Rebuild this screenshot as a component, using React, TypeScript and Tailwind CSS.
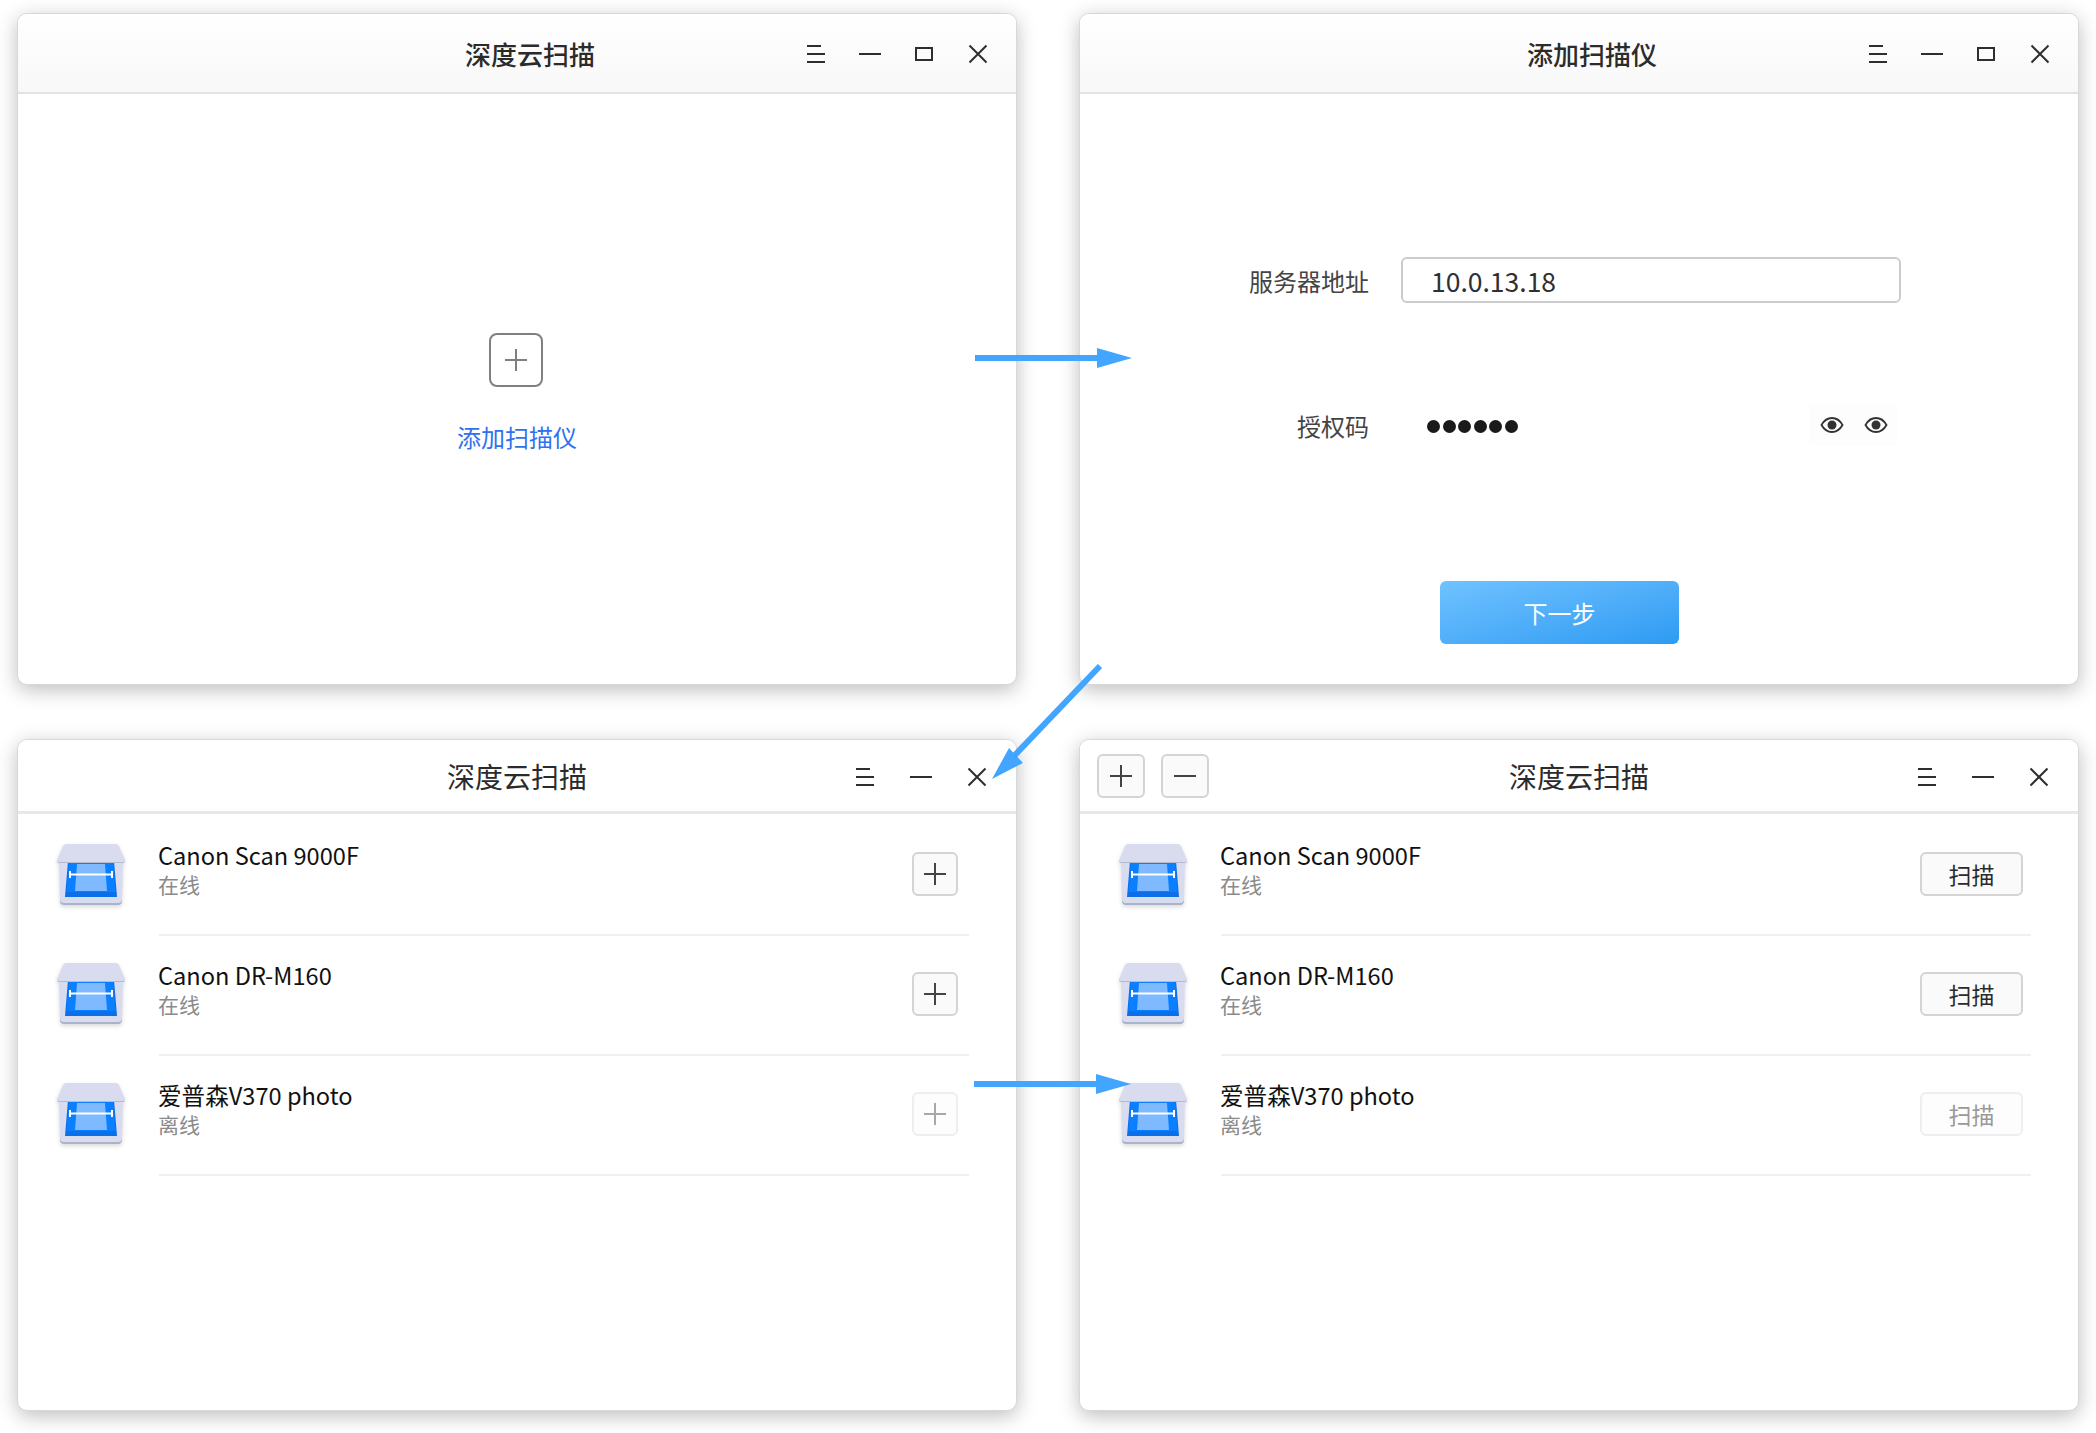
import type { ReactNode } from "react";

const Icon = ({ children, size = 24 }: { children: ReactNode; size?: number }) => (
  <svg width={size} height={size} viewBox="0 0 24 24" fill="none" stroke="#2e2e2e" strokeWidth="2">
    {children}
  </svg>
);

const MenuIcon = () => (
  <Icon>
    <path d="M3 4h14M3 12h18M3 20h18" />
  </Icon>
);
const MinIcon = () => (
  <Icon>
    <path d="M1 12h22" />
  </Icon>
);
const MaxIcon = () => (
  <Icon>
    <rect x="4" y="6" width="16" height="12" />
  </Icon>
);
const CloseIcon = () => (
  <Icon>
    <path d="M3.500 3.500l17 17M20.500 3.500l-17 17" />
  </Icon>
);

const ControlBtn = ({ children, wide }: { children: ReactNode; wide?: boolean }) => (
  <div className={wide ? "flex h-8 w-[56px] items-center justify-center" : "flex h-8 w-[54px] items-center justify-center"}>
    {children}
  </div>
);

const PlusGlyph = ({ color = "#444444", size = 24 }: { color?: string; size?: number }) => (
  <svg width={size} height={size} viewBox="0 0 24 24" fill="none" stroke={color} strokeWidth="2">
    <path d="M1 12h22M12 1v22" />
  </svg>
);

const ScannerIcon = ({ className }: { className?: string }) => (
  <svg width="72" height="66" viewBox="0 0 72 66" className={className}>
    <path d="M4 21h64l-1 37a4 4 0 0 1-4 4H9a4 4 0 0 1-4-4z" fill="#d8dcee" />
    <path d="M5 57a4 4 0 0 0 4 4h54a4 4 0 0 0 4-4v2a4 4 0 0 1-4 4H9a4 4 0 0 1-4-4z" fill="#a9b3c9" />
    <path d="M13 19h46l3 36H10z" fill="#0a6fe8" />
    <path d="M14 19h44l2.500 31h-49z" fill="#0a7fff" />
    <path d="M22 22h28l2 27H20z" fill="#7fb9ff" />
    <path d="M15 32.500h42" stroke="#fff" strokeWidth="2" />
    <path d="M15 29v7M57 29v7" stroke="#fff" strokeWidth="2" />
    <path d="M2 18 8 4a4 4 0 0 1 4-2h48a4 4 0 0 1 4 2l6 14a2 2 0 0 1-2 2H4a2 2 0 0 1-2-2z" fill="#d8dcee" />
    <path d="M2 18a2 2 0 0 0 2 2h64a2 2 0 0 0 2-2v1a2 2 0 0 1-2 2H4a2 2 0 0 1-2-2z" fill="#b4bbd0" />
  </svg>
);

const EyeIcon = () => (
  <svg width="24" height="18" viewBox="0 0 24 18" fill="none">
    <path d="M1.500 9C4 4.500 8 2 12 2s8 2.500 10.500 7C20 13.500 16 16 12 16S4 13.500 1.500 9z" stroke="#333" strokeWidth="1.800" />
    <circle cx="12" cy="9" r="4.500" fill="#333" />
  </svg>
);

type WinProps = {
  title: string;
  shade?: boolean;
  titleClass: string;
  left?: ReactNode;
  controls: ReactNode;
  children: ReactNode;
};

const Win = ({ title, shade, titleClass, left, controls, children }: WinProps) => (
  <div className="flex h-[672px] w-[1000px] flex-col overflow-hidden rounded-[10px] border border-[#d8d8d8] bg-white shadow-[0_5px_20px_rgba(0,0,0,0.26)]">
    <div
      className={
        shade
          ? "grid h-[80px] shrink-0 grid-cols-[1fr_auto_1fr] items-center border-b-2 border-[#e3e3e3] bg-gradient-to-b from-white to-[#f8f8f8]"
          : "grid h-[74px] shrink-0 grid-cols-[1fr_auto_1fr] items-center border-b-[3px] border-[#e8e8e8] bg-white"
      }
    >
      <div className="flex gap-4 pl-[17px]">{left}</div>
      <div className={titleClass}>{title}</div>
      <div className="flex justify-end pr-[11px] pt-[2px]">{controls}</div>
    </div>
    {children}
  </div>
);

const devices = [
  { name: "Canon Scan 9000F", status: "在线", on: true, iconClass: "mt-[26px]" },
  { name: "Canon DR-M160", status: "在线", on: true, iconClass: "mt-[25px]" },
  { name: "爱普森V370 photo", status: "离线", on: false, iconClass: "mt-[25px]" },
];

const DeviceList = ({ action }: { action: (on: boolean) => ReactNode }) => (
  <div className="flex flex-col pt-[2px]">
    {devices.map((d) => (
      <div key={d.name}>
        <div className="flex h-[118px] items-start pl-[37px]">
          <ScannerIcon className={`shrink-0 drop-shadow-[0_2px_2px_rgba(0,0,0,0.15)] ${d.iconClass}`} />
          <div className="ml-[31px] flex-1 pt-[21px]">
            <div className="text-[23.6px] leading-[36px] text-[#111111]">{d.name}</div>
            <div className="mt-[-5px] text-[21px] leading-[32px] text-[#8a8a8a]">{d.status}</div>
          </div>
          {action(d.on)}
        </div>
        <div className="ml-[141px] mr-[47px] h-[2px] bg-[#f0f0f0]" />
      </div>
    ))}
  </div>
);

const Arrows = () => (
  <svg width="2096" height="1433" viewBox="0 0 2096 1433" className="pointer-events-none absolute left-0 top-0">
    <path d="M975 358h122" stroke="#42a5ff" strokeWidth="6" />
    <path d="M1097 348l35 10-35 10z" fill="#42a5ff" />
    <path d="M974 1084h122" stroke="#42a5ff" strokeWidth="6" />
    <path d="M1096 1074l35 10-35 10z" fill="#42a5ff" />
    <path d="M1100 666l-88 92" stroke="#42a5ff" strokeWidth="6" />
    <path d="M1009 748l-17 31 31-16z" fill="#42a5ff" />
  </svg>
);

export default function App() {
  return (
    <div
      className="relative h-[1433px] w-[2096px] overflow-hidden bg-white"
      style={{ fontFamily: '"Noto Sans CJK SC", "Noto Sans", sans-serif' }}
    >
      <div className="grid grid-cols-[1000px_1000px] gap-x-[62px] gap-y-[54px] pl-[17px] pt-[13px]">
        <Win
          title="深度云扫描"
          shade
          titleClass="pl-[26px] text-[26px] font-medium text-[#2b2b2b]"
          controls={
            <>
              <ControlBtn><MenuIcon /></ControlBtn>
              <ControlBtn><MinIcon /></ControlBtn>
              <ControlBtn><MaxIcon /></ControlBtn>
              <ControlBtn><CloseIcon /></ControlBtn>
            </>
          }
        >
          <div className="flex flex-col items-center pr-[2px] pt-[239px]">
            <div className="flex h-[54px] w-[54px] items-center justify-center rounded-[8px] border-2 border-[#808080]">
              <PlusGlyph color="#808080" />
            </div>
            <div className="ml-[2px] mt-[33px] text-[24px] leading-[34px] text-[#2f72f0]">添加扫描仪</div>
          </div>
        </Win>

        <Win
          title="添加扫描仪"
          shade
          titleClass="pl-[26px] text-[26px] font-medium text-[#2b2b2b]"
          controls={
            <>
              <ControlBtn><MenuIcon /></ControlBtn>
              <ControlBtn><MinIcon /></ControlBtn>
              <ControlBtn><MaxIcon /></ControlBtn>
              <ControlBtn><CloseIcon /></ControlBtn>
            </>
          }
        >
          <div className="flex flex-col pt-[163px]">
            <div className="flex h-[46px] items-center">
              <div className="w-[289px] pt-[2px] text-right text-[24px] text-[#444444]">服务器地址</div>
              <div className="ml-[32px] flex h-[46px] w-[500px] items-center rounded-[6px] border-2 border-[#cccccc] pl-[28px] pt-[2px] text-[26.500px] text-[#303030]">
                10.0.13.18
              </div>
            </div>
            <div className="mt-[101px] flex h-[44px] items-center">
              <div className="w-[289px] text-right text-[24px] text-[#444444]">授权码</div>
              <div className="ml-[58px] flex gap-[2.600px]">
                {[0, 1, 2, 3, 4, 5].map((i) => (
                  <div key={i} className="h-[13px] w-[13px] rounded-full bg-[#1a1a1a]" />
                ))}
              </div>
              <div className="ml-[291px] flex h-[42px] gap-[20px] self-start bg-[#fdfdfd] pl-[11px] pr-[9px] pt-[12px]">
                <div className="h-[18px]"><EyeIcon /></div>
                <div className="h-[18px]"><EyeIcon /></div>
              </div>
            </div>
            <div className="ml-[360px] mt-[133px] flex h-[63px] w-[239px] items-center justify-center rounded-[6px] bg-gradient-to-br from-[#6fc2ff] to-[#2b9bf3] text-[24px] text-white">
              下一步
            </div>
          </div>
        </Win>

        <Win
          title="深度云扫描"
          titleClass="text-[28px] text-[#2b2b2b]"
          controls={
            <>
              <ControlBtn wide><MenuIcon /></ControlBtn>
              <ControlBtn wide><MinIcon /></ControlBtn>
              <ControlBtn wide><CloseIcon /></ControlBtn>
            </>
          }
        >
          <DeviceList
            action={(on) => (
              <div
                className={
                  on
                    ? "mr-[58px] mt-[36px] flex h-[44px] w-[46px] items-center justify-center rounded-[6px] border-2 border-[#d4d4d4] bg-[#fafafa]"
                    : "mr-[58px] mt-[36px] flex h-[44px] w-[46px] items-center justify-center rounded-[6px] border-2 border-[#eeeeee] bg-[#fdfdfd]"
                }
              >
                <PlusGlyph color={on ? "#444444" : "#a8a8a8"} />
              </div>
            )}
          />
        </Win>

        <Win
          title="深度云扫描"
          titleClass="text-[28px] text-[#2b2b2b]"
          left={
            <>
              <div className="flex h-[44px] w-[48px] items-center justify-center rounded-[6px] border-2 border-[#d4d4d4] bg-[#fafafa]">
                <PlusGlyph />
              </div>
              <div className="flex h-[44px] w-[48px] items-center justify-center rounded-[6px] border-2 border-[#d4d4d4] bg-[#fafafa]">
                <svg width="24" height="24" viewBox="0 0 24 24" fill="none" stroke="#444444" strokeWidth="2">
                  <path d="M1 12h22" />
                </svg>
              </div>
            </>
          }
          controls={
            <>
              <ControlBtn wide><MenuIcon /></ControlBtn>
              <ControlBtn wide><MinIcon /></ControlBtn>
              <ControlBtn wide><CloseIcon /></ControlBtn>
            </>
          }
        >
          <DeviceList
            action={(on) => (
              <div
                className={
                  on
                    ? "mr-[55px] mt-[36px] flex h-[44px] w-[103px] items-center justify-center rounded-[6px] border-2 border-[#d4d4d4] bg-[#fafafa] text-[23px] text-[#2b2b2b]"
                    : "mr-[55px] mt-[36px] flex h-[44px] w-[103px] items-center justify-center rounded-[6px] border-2 border-[#eeeeee] bg-[#fdfdfd] text-[23px] text-[#999999]"
                }
              >
                扫描
              </div>
            )}
          />
        </Win>
      </div>
      <Arrows />
    </div>
  );
}
